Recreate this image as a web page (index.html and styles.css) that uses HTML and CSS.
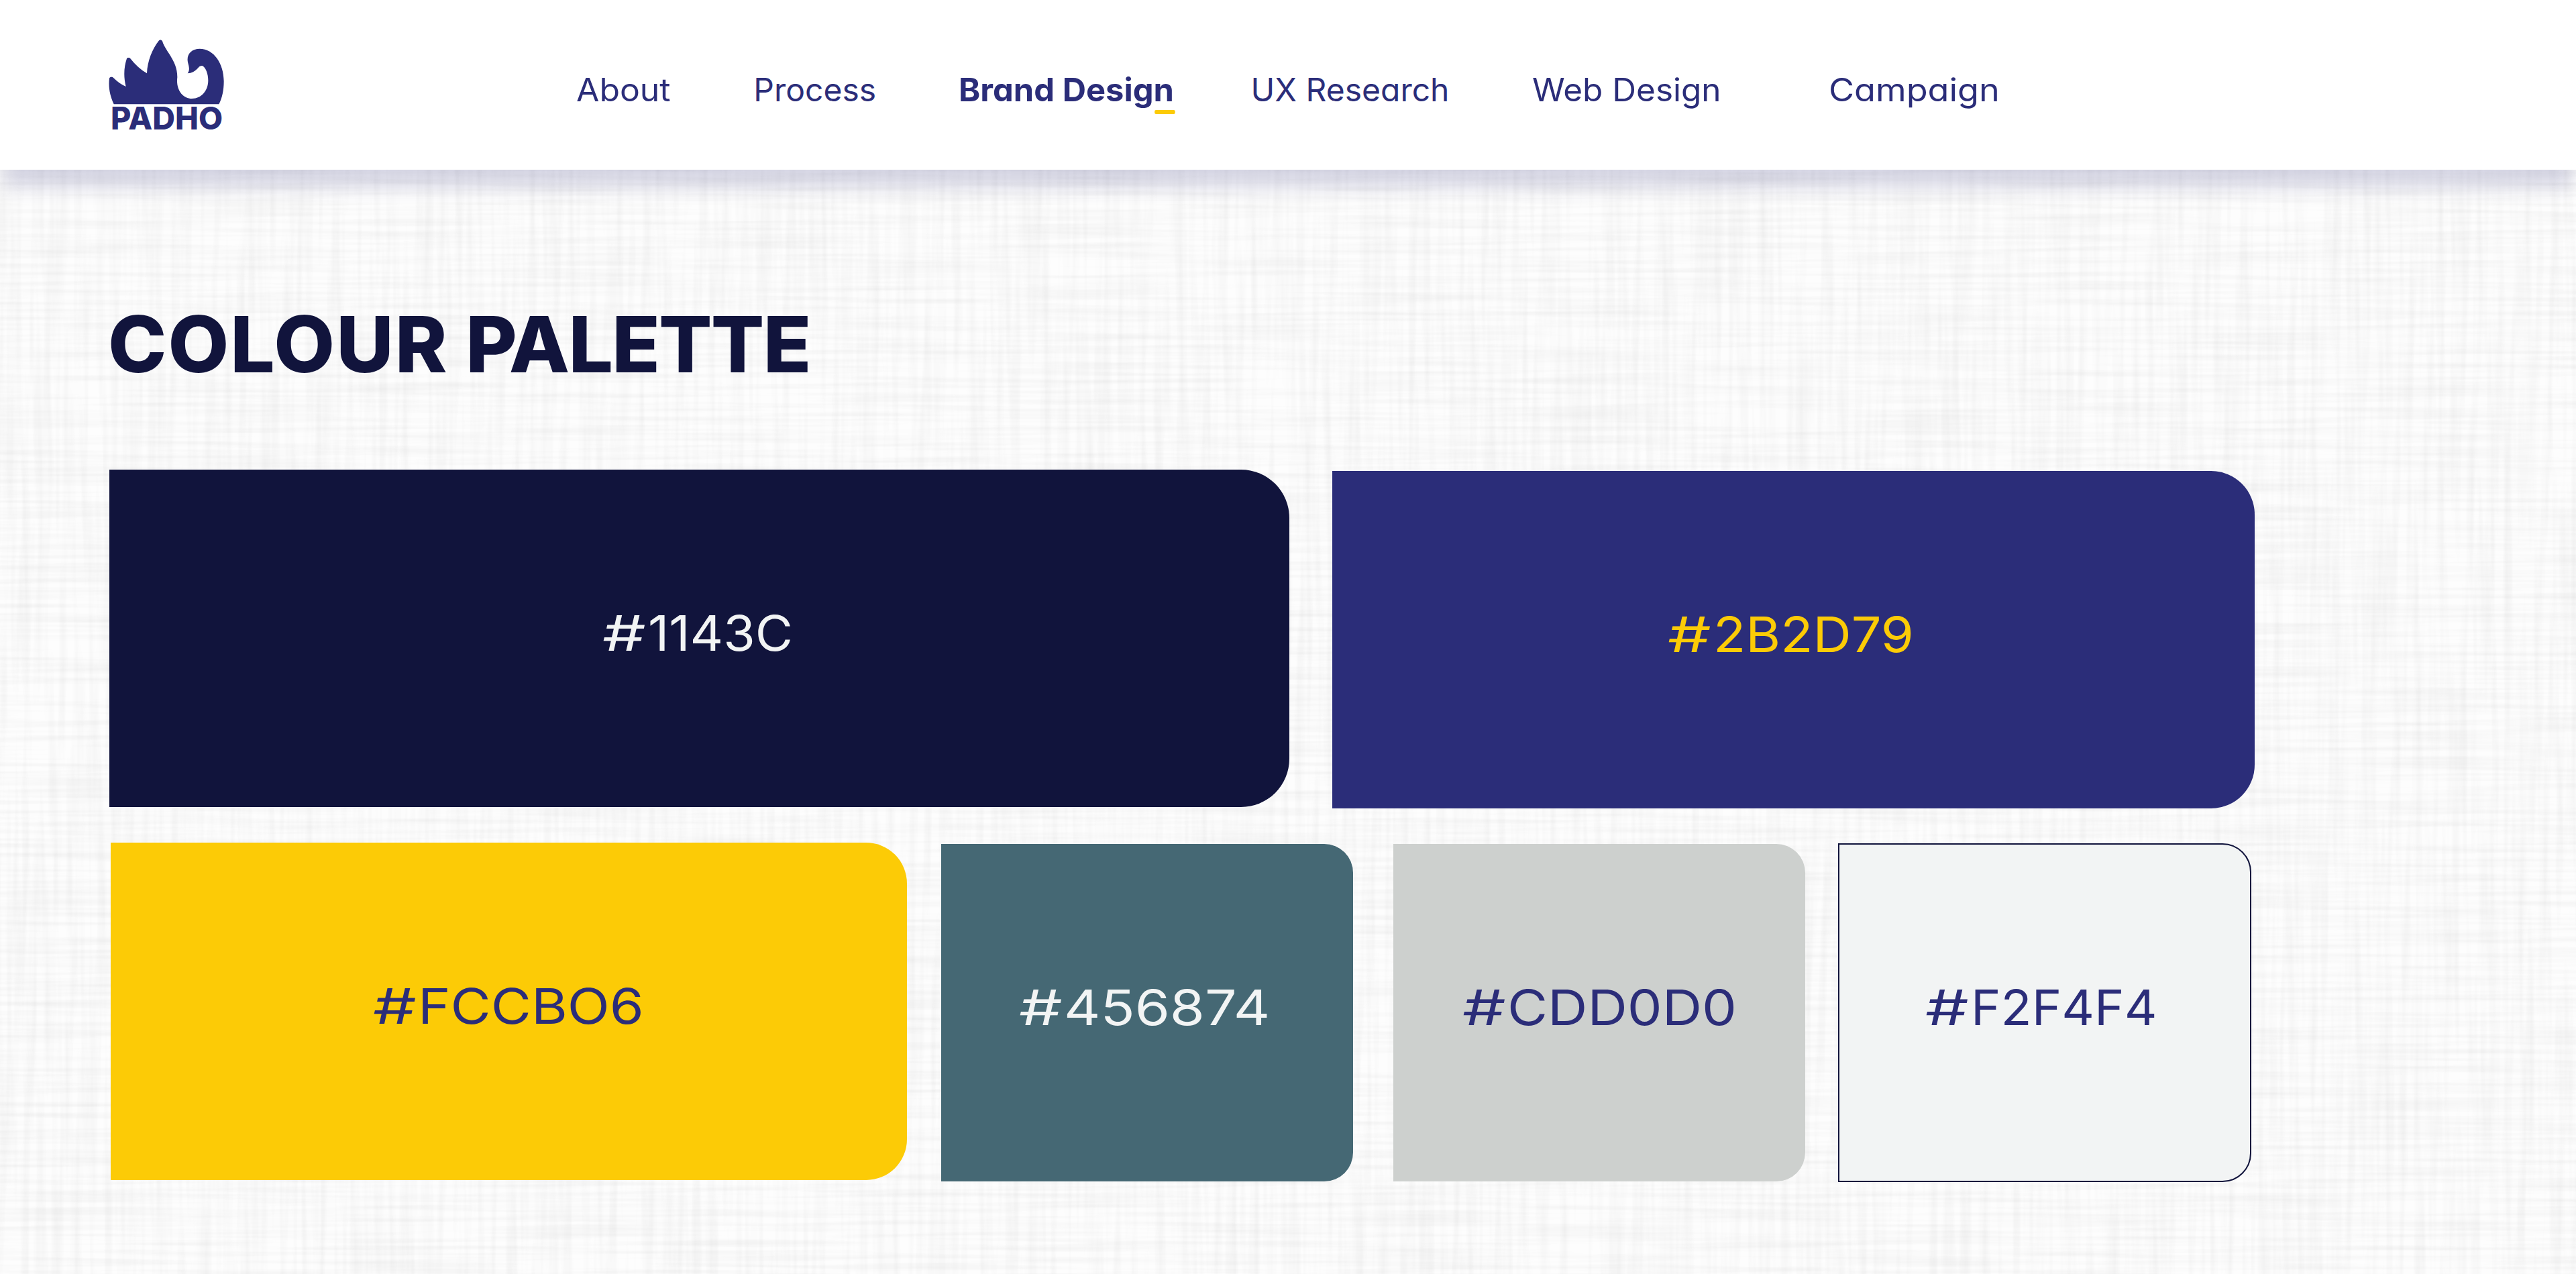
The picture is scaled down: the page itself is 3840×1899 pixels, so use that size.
FILE: index.html
```html
<!DOCTYPE html>
<html lang="en">
<head>
<meta charset="utf-8">
<title>Padho – Brand Design</title>
<link rel="stylesheet" href="styles.css">
</head>
<body>
<header class="site-header">
  <svg class="logo" viewBox="0 0 660 510" role="img" aria-label="Padho">
    <path d="M89 346 C72 308 64 272 69 230 C72 223 82 223 88 229 C104 245 122 258 143 267 C132 222 134 180 147 142 C151 136 159 137 163 142 C184 170 210 192 237 208 C239 152 262 98 290 62 C295 57 302 58 306 64 C320 112 374 150 373 226 C366 281 397 321 438 321 C482 321 511 284 511 240 C511 208 499 180 484 174 C474 173 469 180 463 187 C452 200 437 207 419 208 C431 193 424 174 420 158 C413 123 436 98 473 98 C536 98 581 164 581 243 C581 283 574 317 559 346 Z"/>
    <text class="logo-text" x="75" y="460" textLength="501" lengthAdjust="spacingAndGlyphs">PADHO</text>
  </svg>
  <nav class="nav">
    <a class="nav-link nav-about">About</a>
    <a class="nav-link">Process</a>
    <a class="nav-link nav-active">Brand Design</a>
    <a class="nav-link">UX Research</a>
    <a class="nav-link nav-web">Web Design</a>
    <a class="nav-link nav-campaign">Campaign</a>
  </nav>
</header>
<main class="palette">
  <h1 class="title"><span class="title-wide">COLOUR</span> <span class="title-tight">PALETTE</span></h1>
  <div class="row row-main">
    <section class="swatch navy"><span class="code"><span class="hash">#</span><span class="value">1143C</span></span></section>
    <section class="swatch indigo"><span class="code"><span class="hash">#</span><span class="value">2B2D79</span></span></section>
  </div>
  <div class="row row-accent">
    <section class="swatch yellow"><span class="code"><span class="hash">#</span><span class="value">FCCBO6</span></span></section>
    <section class="swatch teal"><span class="code"><span class="hash">#</span><span class="value">456874</span></span></section>
    <section class="swatch grey"><span class="code"><span class="hash">#</span><span class="value">CDD0D0</span></span></section>
    <section class="swatch light"><span class="code"><span class="hash">#</span><span class="value">F2F4F4</span></span></section>
  </div>
</main>
</body>
</html>
```
FILE: styles.css
```css
* { box-sizing: border-box; }

body {
  margin: 0;
  height: 1899px;
  overflow: hidden;
  font-family: Inter, "Liberation Sans", sans-serif;
  color: #2b2d79;
  background-color: #fdfdfd;
  /* woven linen: one layer of horizontal threads, one of vertical */
  background-image:
    url("data:image/svg+xml,%3Csvg xmlns='http://www.w3.org/2000/svg' width='3840' height='1899'%3E%3Cfilter id='h' x='0' y='0' width='100%25' height='100%25' color-interpolation-filters='sRGB'%3E%3CfeTurbulence type='fractalNoise' baseFrequency='0.004 0.14' numOctaves='2' seed='4'/%3E%3CfeColorMatrix values='0 0 0 0 0 0 0 0 0 0 0 0 0 0 0 .075 0 0 0 -.029'/%3E%3C/filter%3E%3Crect width='3840' height='1899' filter='url(%23h)'/%3E%3C/svg%3E"),
    url("data:image/svg+xml,%3Csvg xmlns='http://www.w3.org/2000/svg' width='3840' height='1899'%3E%3Cfilter id='v' x='0' y='0' width='100%25' height='100%25' color-interpolation-filters='sRGB'%3E%3CfeTurbulence type='fractalNoise' baseFrequency='0.09 0.004' numOctaves='2' seed='9'/%3E%3CfeColorMatrix values='0 0 0 0 0 0 0 0 0 0 0 0 0 0 0 .075 0 0 0 -.029'/%3E%3C/filter%3E%3Crect width='3840' height='1899' filter='url(%23v)'/%3E%3C/svg%3E");
}

.site-header {
  display: flex;
  height: 253px;
  padding-left: 140px;
  background: #fff;
  box-shadow: 0 32px 26px -6px rgba(43, 45, 121, .18);
}

.logo {
  flex: none;
  width: 220px;
  height: 170px;
  margin-top: 40px;
  fill: #2b2d79;
}

.logo-text {
  font-size: 141px;
  font-weight: 800;
}

.nav {
  display: grid;
  grid-template-columns: 264.6px 306.2px 435.1px 419.9px 441.5px auto;
  align-items: start;
  justify-items: start;
  margin: 104px 0 0 498.7px;
}

.nav-link {
  font-size: 48px;
  line-height: 60px;
  font-feature-settings: "cv11";
  white-space: nowrap;
  transform-origin: left;
}

.nav-about { transform: scaleX(1.039); }
.nav-web { transform: scaleX(1.031); }
.nav-campaign { transform: scaleX(1.086); }

.nav-active {
  position: relative;
  font-weight: 700;
  transform: scaleX(1.018);
}

.nav-active::after {
  content: "";
  position: absolute;
  right: -2px;
  top: 60px;
  width: 30px;
  height: 6px;
  border-radius: 2px;
  background: #fccb06;
}

.palette { padding: 190px 0 0 163px; }

.title {
  margin: 0 0 117px -2px;
  width: max-content;
  font-size: 116px;
  line-height: 140px;
  font-weight: 800;
  color: #11143c;
  transform: scaleX(1.014);
  transform-origin: left;
}

.title-wide { letter-spacing: 1.9px; }
.title-tight { letter-spacing: -1.8px; }

.row {
  display: flex;
  align-items: flex-start;
}

.row-main { height: 556px; }
.row-accent { padding-left: 1.5px; }

.swatch {
  flex: none;
  height: 503px;
  padding-top: 200px;
}

.code {
  display: flex;
  width: max-content;
  font-size: 73px;
  line-height: 88px;
}

.hash {
  width: 67.7px;
  transform: scaleX(1.4);
  transform-origin: left;
}

.value { transform-origin: left; }

.navy {
  width: 1759px;
  padding-left: 735px;
  border-radius: 0 72px 72px 0;
  background: #11143c;
  color: #f2f4f4;
}
.navy .value { transform: scaleX(1.054); }

.indigo {
  width: 1375px;
  margin: 2px 0 0 64px;
  padding-left: 500px;
  border-radius: 0 65px 65px 0;
  background: #2b2d79;
  color: #fccb06;
}
.indigo .value { transform: scaleX(1.086); }

.yellow {
  width: 1187.5px;
  padding-left: 391px;
  border-radius: 0 61px 61px 0;
  background: #fccb06;
}
.yellow .value { transform: scaleX(1.128); }

.teal {
  width: 614px;
  margin: 2px 0 0 51px;
  padding-left: 115.6px;
  border-radius: 0 43px 43px 0;
  background: #456874;
  color: #f2f4f4;
}
.teal .value { transform: scaleX(1.154); }

.grey {
  width: 614px;
  margin: 2px 0 0 60px;
  padding-left: 102.5px;
  border-radius: 0 43px 43px 0;
  background: #cdd0ce;
}
.grey .value { transform: scaleX(1.127); }

.light {
  width: 616px;
  height: 505px;
  margin: 1px 0 0 49px;
  padding: 199px 0 0 128px;
  border: 2px solid #11143c;
  border-radius: 0 43px 43px 0;
  background: #f2f4f4;
}
.light .value { transform: scaleX(1.035); }
```
